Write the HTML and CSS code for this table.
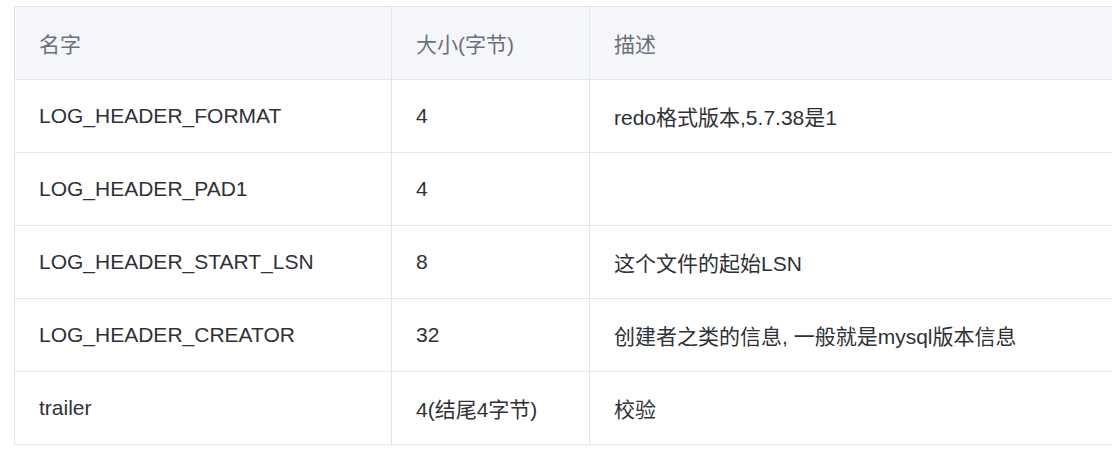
FILE: index.html
```html
<!DOCTYPE html>
<html>
<head>
<meta charset="utf-8">
<link rel="stylesheet" href="styles.css">
</head>
<body>
<div class="wrap">
<table class="tbl">
<colgroup><col class="c1"><col class="c2"><col class="c3"></colgroup>
<thead>
<tr><th>名字</th><th>大小(字节)</th><th>描述</th></tr>
</thead>
<tbody>
<tr><td>LOG_HEADER_FORMAT</td><td>4</td><td>redo格式版本,5.7.38是1</td></tr>
<tr><td>LOG_HEADER_PAD1</td><td>4</td><td></td></tr>
<tr><td>LOG_HEADER_START_LSN</td><td>8</td><td>这个文件的起始LSN</td></tr>
<tr><td>LOG_HEADER_CREATOR</td><td>32</td><td>创建者之类的信息, 一般就是mysql版本信息</td></tr>
<tr><td>trailer</td><td>4(结尾4字节)</td><td>校验</td></tr>
</tbody>
</table>
</div>
</body>
</html>
```
FILE: styles.css
```css
html, body {
  margin: 0;
  padding: 0;
  background: #ffffff;
  overflow: hidden;
}
.wrap {
  padding: 6px 0 0 14px;
  overflow: hidden;
}
.tbl {
  border-collapse: collapse;
  table-layout: fixed;
  width: 1140px;
  font-family: "Liberation Sans", Arial, "Noto Sans CJK SC", sans-serif;
  font-size: 21px;
}
.c1 { width: 377px; }
.c2 { width: 198px; }
.tbl th, .tbl td {
  border: 1px solid #e3e5ee;
  height: 73px;
  padding: 0 24px;
  text-align: left;
  vertical-align: middle;
  box-sizing: border-box;
  white-space: nowrap;
}
.tbl th {
  background: #f5f6fa;
  color: #6b6f7b;
  font-weight: normal;
}
.tbl td {
  color: #2f3136;
}
```
